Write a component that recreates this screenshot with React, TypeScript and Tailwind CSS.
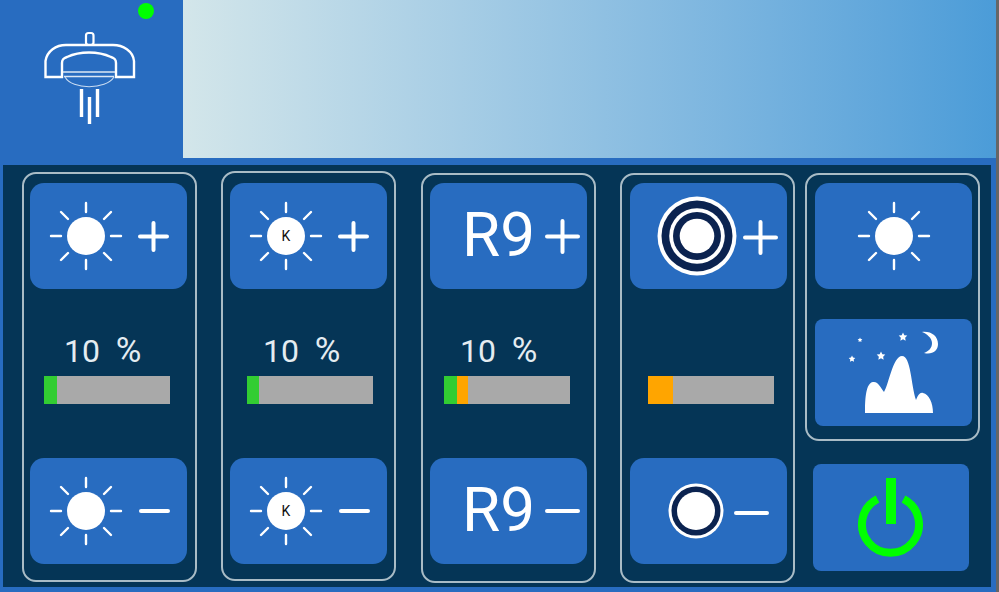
import type { ReactNode } from 'react'

function Sun({ letter }: { letter?: boolean }) {
  const rays = [
    [-35, 0, -25, 0],
    [25, 0, 35, 0],
    [0, -33, 0, -24],
    [0, 24, 0, 33],
    [-25, -24, -18, -17],
    [25, -24, 18, -17],
    [-25, 24, -18, 17],
    [25, 24, 18, 17],
  ]
  return (
    <svg width="76" height="76" viewBox="-38 -38 76 76" className="shrink-0">
      {rays.map((r, i) => (
        <line key={i} x1={r[0]} y1={r[1]} x2={r[2]} y2={r[3]} stroke="#fff" strokeWidth="2.4" strokeLinecap="round" />
      ))}
      <circle r="19" fill="#fff" />
      {letter && (
        <text y="5" textAnchor="middle" fontSize="14" fill="#111" fontFamily="Roboto, sans-serif">
          K
        </text>
      )}
    </svg>
  )
}

function Plus({ size = 13.5 }: { size?: number }) {
  return (
    <svg width={size * 2 + 4} height={size * 2 + 4} viewBox={`${-size - 2} ${-size - 2} ${size * 2 + 4} ${size * 2 + 4}`} className="shrink-0">
      <path d={`M${-size} 0H${size}M0 ${-size}V${size}`} stroke="#fff" strokeWidth="4" strokeLinecap="round" />
    </svg>
  )
}

function Minus({ size = 13.5 }: { size?: number }) {
  return (
    <svg width={size * 2 + 4} height="8" viewBox={`${-size - 2} -4 ${size * 2 + 4} 8`} className="shrink-0">
      <path d={`M${-size} 0H${size}`} stroke="#fff" strokeWidth="4" strokeLinecap="round" />
    </svg>
  )
}

function RingsBig() {
  return (
    <svg width="80" height="80" viewBox="-40 -40 80 80" className="shrink-0">
      <circle r="39.5" fill="#fff" />
      <circle r="35.5" fill="#0b2350" />
      <circle r="27.8" fill="#fff" />
      <circle r="24" fill="#0b2350" />
      <circle r="17.3" fill="#fff" />
    </svg>
  )
}

function RingSmall() {
  return (
    <svg width="56" height="56" viewBox="-28 -28 56 56" className="shrink-0">
      <circle r="27.5" fill="#fff" />
      <circle r="24.5" fill="#0b2350" />
      <circle r="19" fill="#fff" />
    </svg>
  )
}

function Lamp() {
  return (
    <svg width="96" height="100" viewBox="41 28 96 100" fill="none" stroke="#fff" className="shrink-0">
      <rect x="86" y="33" width="7.5" height="12" rx="2.5" strokeWidth="2.2" />
      <path
        d="M45.5 77V61C47 51 56 45 66 45H113C123 45 133 51 134 61V77H116V63C116 59 114 58 111 57C98 51 80 51 67 57C64 58 62 59 62 63V77Z"
        strokeWidth="2.4"
      />
      <path d="M63 72H115M64 76.5H114" strokeWidth="1.3" stroke="#dbe7f5" />
      <path d="M65 77C72 90 106 90 114 77" strokeWidth="1.1" stroke="#c9dcf2" />
      <path d="M81.5 89V117M89.5 97V124M97.5 89V117" strokeWidth="3.4" />
    </svg>
  )
}

function Star({ x, y, r }: { x: number; y: number; r: number }) {
  const pts = Array.from({ length: 10 }, (_, i) => {
    const a = (Math.PI / 5) * i - Math.PI / 2
    const d = i % 2 === 0 ? r : r * 0.5
    return `${x + d * Math.cos(a)},${y + d * Math.sin(a)}`
  })
  return <polygon points={pts.join(' ')} fill="#fff" />
}

function Night() {
  return (
    <svg width="157" height="107" viewBox="815 319 157 107" className="block">
      <path
        d="M865 413C865 398 866 383 873 382C878 381 881 388 884 392C889 384 893 356 902 356C911 356 911 385 916 400C918 395 920 392 923 393C929 394 933 403 933 413Z"
        fill="#fff"
      />
      <path d="M922 332C931 331 938 336 938 344C938 351 932 355 924 353C929 351 932 348 932 343C932 338 927 334 922 332Z" fill="#fff" />
      <Star x={903} y={337} r={4.5} />
      <Star x={881} y={356} r={4.5} />
      <Star x={852} y={359} r={3.5} />
      <Star x={860} y={340} r={2.5} />
    </svg>
  )
}

function Power() {
  return (
    <svg width="70" height="84" viewBox="856 476 70 84" className="shrink-0">
      <path d="M877.5 499A28.5 28.5 0 1 0 903.5 499" fill="none" stroke="#00ff00" strokeWidth="8" />
      <rect x="886" y="478" width="10" height="46" fill="#00ff00" />
    </svg>
  )
}

function Btn({ className, children }: { className: string; children: ReactNode }) {
  return <div className={`flex h-[106px] w-[157px] items-center rounded-[14px] bg-[#286cc0] ${className}`}>{children}</div>
}

function Level({ textClass, barClass, green, orange }: { textClass?: string; barClass: string; green: number; orange: number }) {
  return (
    <div className="mt-[42px] flex flex-col">
      <div className={`h-[40px] whitespace-pre text-[32px] leading-[40px] text-[#e4ecf1] ${textClass ?? 'invisible'}`}>
        10  <span className="text-[35px]">%</span>
      </div>
      <div className={`mt-[5px] flex h-[28px] w-[126px] bg-[#a9a9a9] ${barClass}`}>
        <div className="bg-[#32cd32]" style={{ width: green }} />
        <div className="bg-[#ffa500]" style={{ width: orange }} />
      </div>
    </div>
  )
}

function Column({ className, children }: { className: string; children: ReactNode }) {
  return <div className={`h-[410px] w-[175px] shrink-0 rounded-[14px] border-2 border-[#a9bcc6] ${className}`}>{children}</div>
}

export default function App() {
  return (
    <div className="flex h-[592px] w-[999px] overflow-hidden bg-[#666666] font-['Roboto',sans-serif]">
      <div className="h-full w-[996px] bg-[#286cc0]">
        <div className="flex h-[158px]">
          <div className="relative flex w-[183px] items-start pl-[41px] pt-[28px]">
            <span className="absolute left-[138px] top-[3px] h-[16px] w-[16px] rounded-full bg-[#00ff00]" />
            <Lamp />
          </div>
          <div className="flex-1 bg-gradient-to-r from-[#d3e6ea] to-[#4b9cd8]" />
        </div>

        <div className="ml-[3px] mt-[7px] flex h-[422px] w-[988px] items-start bg-[#053556]">
          <Column className="ml-[19px] mt-[7px] pl-[6px] pt-[9px]">
            <Btn className="pl-[18px]">
              <Sun />
              <span className="ml-[14px]"><Plus /></span>
            </Btn>
            <Level textClass="ml-[34px]" barClass="ml-[14px]" green={13} orange={0} />
            <Btn className="mt-[54px] pl-[18px]">
              <Sun />
              <span className="ml-[15px]"><Minus /></span>
            </Btn>
          </Column>

          <Column className="ml-[24px] mt-[6px] pl-[7px] pt-[10px]">
            <Btn className="pl-[18px]">
              <Sun letter />
              <span className="ml-[14px]"><Plus /></span>
            </Btn>
            <Level textClass="ml-[33px]" barClass="ml-[17px]" green={12} orange={0} />
            <Btn className="mt-[54px] pl-[18px]">
              <Sun letter />
              <span className="ml-[15px]"><Minus /></span>
            </Btn>
          </Column>

          <Column className="ml-[25px] mt-[8px] pl-[7px] pt-[8px]">
            <Btn className="pl-[32px]">
              <span className="-mt-[3px] text-[62px] leading-none text-white">R9</span>
              <span className="ml-[10px]"><Plus size={15.5} /></span>
            </Btn>
            <Level textClass="ml-[30px]" barClass="ml-[14px]" green={13} orange={11} />
            <Btn className="mt-[54px] pl-[32px]">
              <span className="-mt-[3px] text-[62px] leading-none text-white">R9</span>
              <span className="ml-[10px]"><Minus size={15.5} /></span>
            </Btn>
          </Column>

          <Column className="ml-[24px] mt-[8px] pl-[8px] pt-[8px]">
            <Btn className="pl-[27px]">
              <RingsBig />
              <span className="ml-[6px] mt-[3px]"><Plus size={15.5} /></span>
            </Btn>
            <Level barClass="ml-[18px]" green={0} orange={25} />
            <Btn className="mt-[54px] pl-[38px]">
              <RingSmall />
              <span className="ml-[10px] mt-[4px]"><Minus size={15.5} /></span>
            </Btn>
          </Column>

          <div className="ml-[10px] mt-[8px] flex flex-col">
            <div className="h-[268px] w-[175px] rounded-[14px] border-2 border-[#a9bcc6] pl-[8px] pt-[8px]">
              <Btn className="justify-center rounded-[8px]">
                <Sun />
              </Btn>
              <div className="mt-[30px] h-[107px] w-[157px] overflow-hidden rounded-[8px] bg-[#286cc0]">
                <Night />
              </div>
            </div>
            <div className="ml-[8px] mt-[23px] flex h-[107px] w-[156px] items-center justify-center rounded-[8px] bg-[#286cc0]">
              <Power />
            </div>
          </div>
        </div>
      </div>
    </div>
  )
}
